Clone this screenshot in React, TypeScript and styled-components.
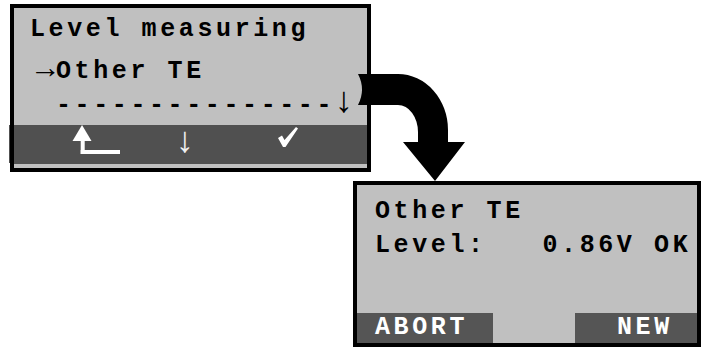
import React from "react";
import styled, { createGlobalStyle } from "styled-components";

const GlobalStyle = createGlobalStyle`
  html, body { margin: 0; padding: 0; background: #ffffff; }
  #root { width: 701px; height: 347px; }
`;

const Page = styled.div`
  position: relative;
  width: 701px;
  height: 347px;
  overflow: hidden;
  padding-top: 4px;
  box-sizing: border-box;
  display: flex;
  flex-direction: column;
  align-items: flex-start;
`;

const Screen = styled.div<{ $x: number; $w: number; $h: number; $mt?: number }>`
  margin-left: ${(p) => p.$x}px;
  margin-top: ${(p) => p.$mt ?? 0}px;
  width: ${(p) => p.$w}px;
  height: ${(p) => p.$h}px;
  box-sizing: border-box;
  border: 4px solid #000;
  background: #c0c0c0;
  display: flex;
  flex-direction: column;
  font-family: "Liberation Mono", "Courier New", monospace;
  font-weight: 700;
  font-size: 25px;
  letter-spacing: 3.6px;
  color: #000;
`;

const TextArea = styled.div<{ $pt: number; $pl: number; $h?: number }>`
  padding-top: ${(p) => p.$pt}px;
  padding-left: ${(p) => p.$pl}px;
  height: ${(p) => (p.$h ? `${p.$h}px` : "auto")};
  box-sizing: border-box;
  flex: ${(p) => (p.$h ? "none" : "1")};
`;

const Line = styled.div<{ $h: number }>`
  height: ${(p) => p.$h}px;
  line-height: ${(p) => p.$h}px;
  white-space: pre;
`;

const Sym = styled.span`
  display: inline-block;
  width: 26px;
  font-family: "Liberation Sans", "DejaVu Sans", sans-serif;
  font-weight: 400;
  font-size: 31px;
  line-height: 0;
  letter-spacing: -5px;
`;

const DownSym = styled.span`
  font-family: "Liberation Sans", "DejaVu Sans", sans-serif;
  font-weight: 400;
  font-size: 36px;
  line-height: 0;
  letter-spacing: 0;
`;

const SoftBar = styled.div`
  position: relative;
  height: 39px;
  background: #505050;
  display: grid;
  grid-template-columns: 137px 68px 138px;
  align-items: start;
  &::before {
    content: "";
    position: absolute;
    left: -5px;
    top: 0;
    bottom: 1px;
    width: 1px;
    background: #505050;
  }
`;

const ReturnIcon = styled.svg`
  margin-left: 45px;
  display: block;
`;

const BarArrow = styled.div`
  justify-self: center;
  color: #f0f0f0;
  font-family: "Liberation Sans", "DejaVu Sans", sans-serif;
  font-weight: 400;
  font-size: 36px;
  line-height: 30px;
  letter-spacing: 0;
`;

const CheckIcon = styled.svg`
  justify-self: center;
  margin-top: 2px;
  display: block;
`;

const KeyRow = styled.div`
  display: flex;
  justify-content: space-between;
  height: 30px;
`;

const Key = styled.div<{ $w: number; $pl: number }>`
  width: ${(p) => p.$w}px;
  height: 30px;
  box-sizing: border-box;
  padding-left: ${(p) => p.$pl}px;
  padding-top: 2px;
  line-height: 26px;
  background: #555555;
  color: #ffffff;
  white-space: pre;
`;

const CurvedArrow = styled.svg`
  position: absolute;
  left: 350px;
  top: 68px;
  pointer-events: none;
`;

export default function App() {
  return (
    <>
      <GlobalStyle />
      <Page>
        <Screen $x={10} $w={361} $h={168}>
          <TextArea $pt={1} $pl={16} $h={117}>
            <Line $h={42}>Level measuring</Line>
            <Line $h={42}>
              <Sym>→</Sym>Other TE
            </Line>
            <Line $h={26}>
              <Sym> </Sym>---------------<DownSym>↓</DownSym>
            </Line>
          </TextArea>
          <SoftBar>
            <ReturnIcon width="62" height="31" viewBox="0 0 62 31">
              <polygon points="23,0 32.5,16 13.5,16" fill="#fff" />
              <rect x="21.7" y="15" width="4" height="14" fill="#fff" />
              <rect x="21.7" y="25" width="39.3" height="4" fill="#fff" />
            </ReturnIcon>
            <BarArrow>↓</BarArrow>
            <CheckIcon width="20" height="20" viewBox="0 0 20 20">
              <polygon points="0,11 4,8.5 6.5,13 18,0 20,1.5 7.5,20 5,20" fill="#fff" />
            </CheckIcon>
          </SoftBar>
        </Screen>
        <Screen $x={353} $w={348} $h={166} $mt={9}>
          <TextArea $pt={10} $pl={18}>
            <Line $h={34}>Other TE</Line>
            <Line $h={34}>Level:   0.86V OK</Line>
          </TextArea>
          <KeyRow>
            <Key $w={136} $pl={18}>ABORT</Key>
            <Key $w={122} $pl={42}>NEW</Key>
          </KeyRow>
        </Screen>
        <CurvedArrow width="120" height="116" viewBox="350 68 120 116">
          <path
            d="M 358 74 L 398 74 A 50 56 0 0 1 448 130 L 448 142 L 465 142 L 435 181 L 403 142 L 418 142 L 418 132 A 20 27 0 0 0 398 105 L 358 105 Q 366 89.5 358 74 Z"
            fill="#000"
          />
        </CurvedArrow>
      </Page>
    </>
  );
}
